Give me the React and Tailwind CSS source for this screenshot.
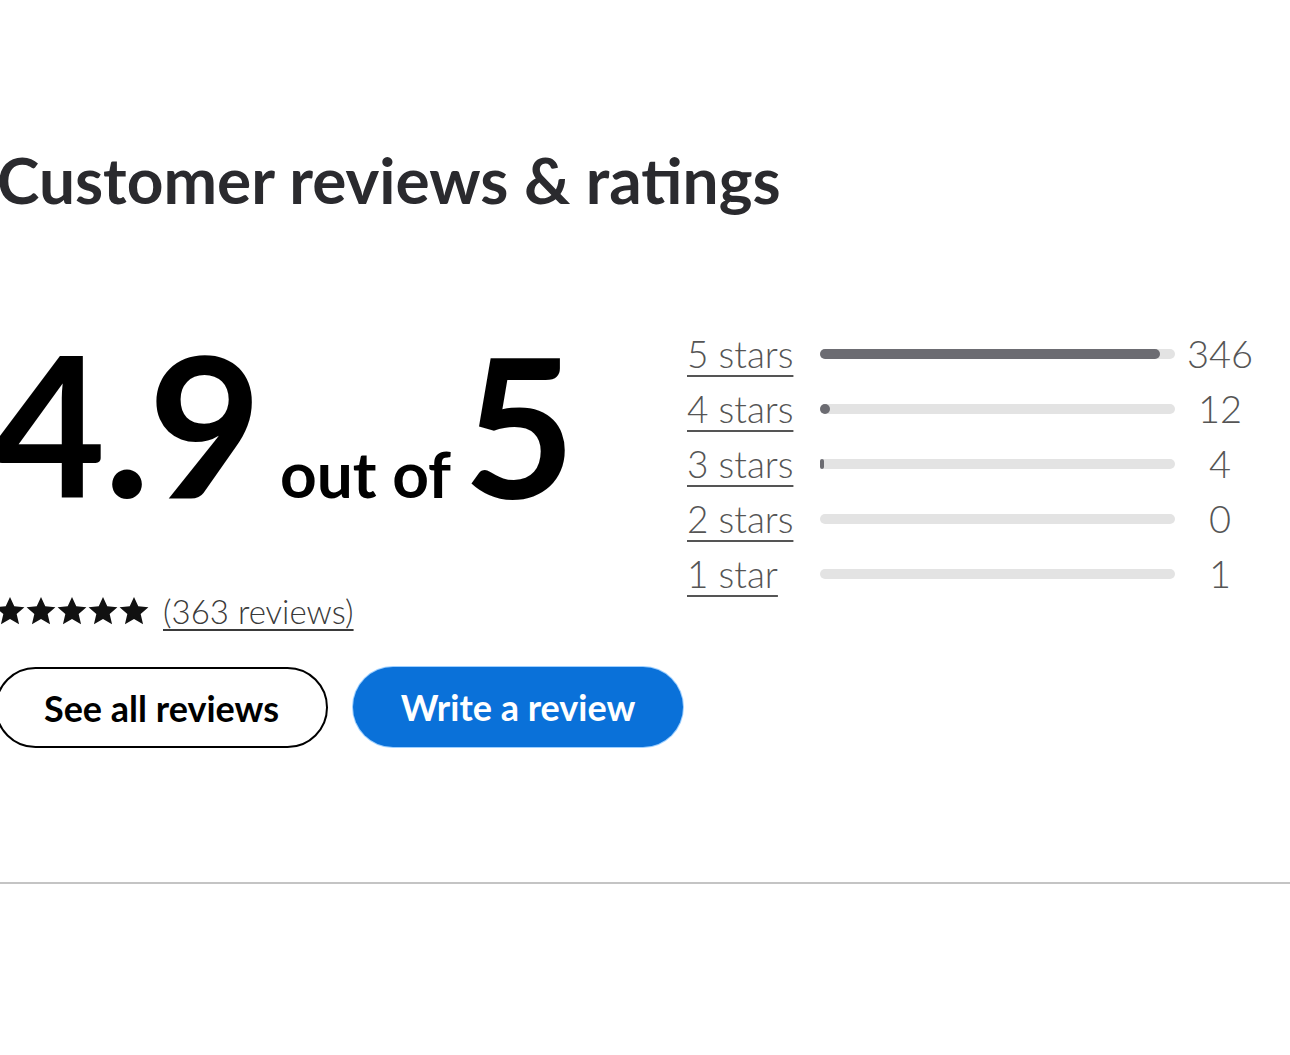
import React from "react";

const rows = [
  { label: "5 stars", count: 346, pct: 95.8 },
  { label: "4 stars", count: 12, pct: 3.3 },
  { label: "3 stars", count: 4, pct: 1.1 },
  { label: "2 stars", count: 0, pct: 0 },
  { label: "1 star", count: 1, pct: 0 },
];

function Star() {
  return (
    <svg viewBox="0 0 24 24" className="w-[32px] h-[32px] -mr-[1px]" fill="#111">
      <path d="M12 1.5l3.2 7 7.6.7-5.8 5.1 1.8 7.6L12 18l-6.8 3.9 1.8-7.6-5.8-5.1 7.6-.7z" />
    </svg>
  );
}

export default function App() {
  return (
    <div
      className="w-[1290px] h-[1055px] bg-white overflow-hidden relative"
      style={{ fontFamily: "Lato, 'Noto Sans', sans-serif" }}
    >
      <div className="pt-[135px]">
        <h1 className="text-[64px] font-bold text-[#2a2a2e] leading-[90px] ml-[-3px]">
          Customer reviews &amp; ratings
        </h1>
        <div className="flex mt-[113px]">
          <div className="w-[687px] shrink-0">
            <div className="flex items-baseline text-black font-bold ml-[-8px] h-[190px] -mt-[10px]">
              <span className="text-[196px] leading-[190px] tracking-[-2px]">4.9</span>
              <span className="text-[64px] ml-[20px] mr-[12px]">out of</span>
              <span className="text-[194px] leading-[190px]">5</span>
            </div>
            <div className="flex items-center h-[44px] mt-[71px] ml-[-6px]">
              <div className="flex">
                <Star /><Star /><Star /><Star /><Star />
              </div>
              <span className="ml-[14px] text-[33px] text-[#3a3a3a] underline underline-offset-[5px] decoration-[1.5px] leading-[44px]" style={{ fontWeight: 300 }}>
                (363 reviews)
              </span>
            </div>
            <div className="flex gap-[25px] mt-[34px] ml-[-5px]">
              <button className="w-[333px] h-[81px] rounded-full border-2 border-black bg-white text-black text-[36px] font-bold">
                See all reviews
              </button>
              <button className="w-[330px] h-[80px] rounded-full bg-[#0a71d9] text-white text-[36px] font-bold ring-1 ring-[#9fd0ff]">
                Write a review
              </button>
            </div>
          </div>
          <div className="flex flex-col gap-[20px] -mt-[2px]">
            {rows.map((r) => (
              <div key={r.label} className="flex items-center h-[35px]">
                <span className="w-[133px] shrink-0 text-[37px] text-[#555] underline underline-offset-[7px] decoration-[2px] leading-[35px]" style={{ fontWeight: 300 }}>
                  {r.label}
                </span>
                <div className="w-[355px] h-[10px] rounded-full bg-[#e3e3e3] relative shrink-0">
                  {r.pct > 0 && (
                    <div
                      className="absolute left-0 top-0 h-full rounded-full bg-[#6c6c72]"
                      style={{ width: r.pct < 2 ? "4px" : r.pct < 5 ? "10px" : `${r.pct}%` }}
                    />
                  )}
                </div>
                <span className="w-[90px] text-center text-[38px] text-[#555] leading-[35px]" style={{ fontWeight: 300 }}>
                  {r.count}
                </span>
              </div>
            ))}
          </div>
        </div>
        <div className="mt-[134px] h-[2px] bg-[#c4c4c4] w-full" />
      </div>
    </div>
  );
}
